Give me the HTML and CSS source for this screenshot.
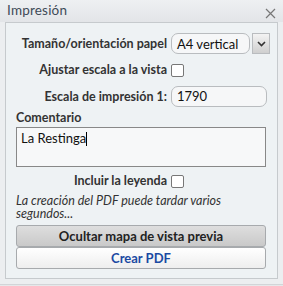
FILE: index.html
```html
<!DOCTYPE html>
<html lang="es">
<head>
    <meta charset="UTF-8">
    <title>Impresión</title>
    <link rel="stylesheet" href="styles.css">
</head>
<body>
    <div class="dialog">
        <div class="dialog-header">
            <span class="dialog-title">Impresión</span>
            <svg class="dialog-close" width="11" height="11" viewBox="0 0 11 11"><path d="M1 1 L10 10 M10 1 L1 10" stroke="#777" stroke-width="1.2" fill="none"/></svg>
        </div>
        <div class="dialog-body">
            <div class="form-row">
                <label class="form-label">Tamaño/orientación papel</label>
                <div class="select-box">
                    <span class="select-value">A4 vertical</span>
                    <span class="select-arrow">
                        <svg width="9" height="6" viewBox="0 0 9 6"><path d="M1 1 L4.5 4.5 L8 1" fill="none" stroke="#333" stroke-width="1.6"/></svg>
                    </span>
                </div>
            </div>
            <div class="form-row row-check">
                <label class="form-label">Ajustar escala a la vista</label>
                <span class="checkbox"></span>
            </div>
            <div class="form-row row-input">
                <label class="form-label">Escala de impresión 1:</label>
                <div class="text-input">1790</div>
            </div>
            <div class="comment-label">Comentario</div>
            <div class="textarea">La Restinga<span class="caret"></span></div>
            <div class="form-row row-legend">
                <label class="form-label">Incluir la leyenda</label>
                <span class="checkbox"></span>
            </div>
            <p class="note">La creación del PDF puede tardar varios segundos...</p>
            <button class="btn btn-gray">Ocultar mapa de vista previa</button>
            <button class="btn btn-white">Crear PDF</button>
        </div>
    </div>
</body>
</html>
```

FILE: styles.css
```css
body {
    margin: 0;
    width: 283px;
    height: 286px;
    background: #e6e8ea;
    font-family: Lato, "Noto Sans", sans-serif;
    color: #2b2b2b;
    overflow: hidden;
}
.dialog {
    height: 284px;
    background: #eceef0;
    border-bottom: 1px solid #d2d5d8;
}
.dialog-header {
    height: 22px;
    display: flex;
    align-items: center;
    justify-content: space-between;
    padding: 0 7px;
    background: linear-gradient(#eef0f2, #e3e5e8);
}
.dialog-title {
    font-size: 13.5px;
    letter-spacing: 0.2px;
    color: #3e4a57;
    margin-top: -3px;
}
.dialog-close {
    margin-top: 4px;
}
.dialog-body {
    box-sizing: border-box;
    margin: 0 5px;
    height: 257px;
    border: 1px solid #c6cacd;
    background: #eef2f4;
    padding: 10px 11px 0 10px;
    display: flex;
    flex-direction: column;
}
.form-row {
    display: grid;
    grid-template-columns: 151px auto;
    column-gap: 4px;
    align-items: center;
    font-size: 12.5px;
    font-weight: 700;
    line-height: 16px;
    color: #333;
}
.form-label {
    text-align: right;
}
.select-box {
    display: flex;
    height: 21px;
}
.select-value {
    width: 72px;
    border: 1px solid #b9bcbf;
    border-radius: 7px;
    background: #f6f7f8;
    padding-left: 5px;
    font-size: 13px;
    line-height: 20px;
    font-weight: 400;
    color: #111;
}
.select-arrow {
    width: 16px;
    margin-left: 2px;
    border: 1px solid #b9bcbf;
    background: linear-gradient(#f3f3f3, #cfcfcf);
    display: flex;
    align-items: center;
    justify-content: center;
}
.row-check {
    margin-top: 8px;
}
.checkbox {
    width: 11px;
    height: 11px;
    border: 1px solid #777;
    border-radius: 2px;
    background: #fff;
}
.row-input {
    margin-top: 8px;
}
.text-input {
    width: 89px;
    height: 19px;
    border: 1px solid #b9bcbf;
    border-radius: 7px;
    background: #f6f7f8;
    padding-left: 5px;
    font-size: 13px;
    line-height: 19px;
    font-weight: 400;
    color: #111;
}
.comment-label {
    margin-top: 3px;
    font-size: 12.5px;
    line-height: 16px;
    font-weight: 700;
    color: #333;
}
.textarea {
    margin-top: 1px;
    height: 34px;
    border: 1px solid #888;
    background: #f7f8f9;
    padding: 2px 4px;
    font-size: 13px;
    line-height: 16px;
    color: #111;
}
.caret {
    display: inline-block;
    width: 1px;
    height: 14px;
    background: #000;
    vertical-align: -3px;
}
.row-legend {
    margin-top: 6px;
}
.note {
    margin: 5px 0 0 0;
    font-size: 12.5px;
    font-style: italic;
    line-height: 13px;
    color: #333;
}
.btn {
    height: 22px;
    border: 1px solid #a7aaad;
    border-radius: 3px;
    font-family: Lato, "Noto Sans", sans-serif;
    font-size: 13px;
    font-weight: 700;
    padding: 0;
}
.btn-gray {
    margin-top: 5px;
    background: linear-gradient(#dedede, #c9c9c9);
    color: #222;
}
.btn-white {
    margin-top: 0;
    background: linear-gradient(#ffffff, #eeeeee);
    color: #1b4aa3;
}
```
